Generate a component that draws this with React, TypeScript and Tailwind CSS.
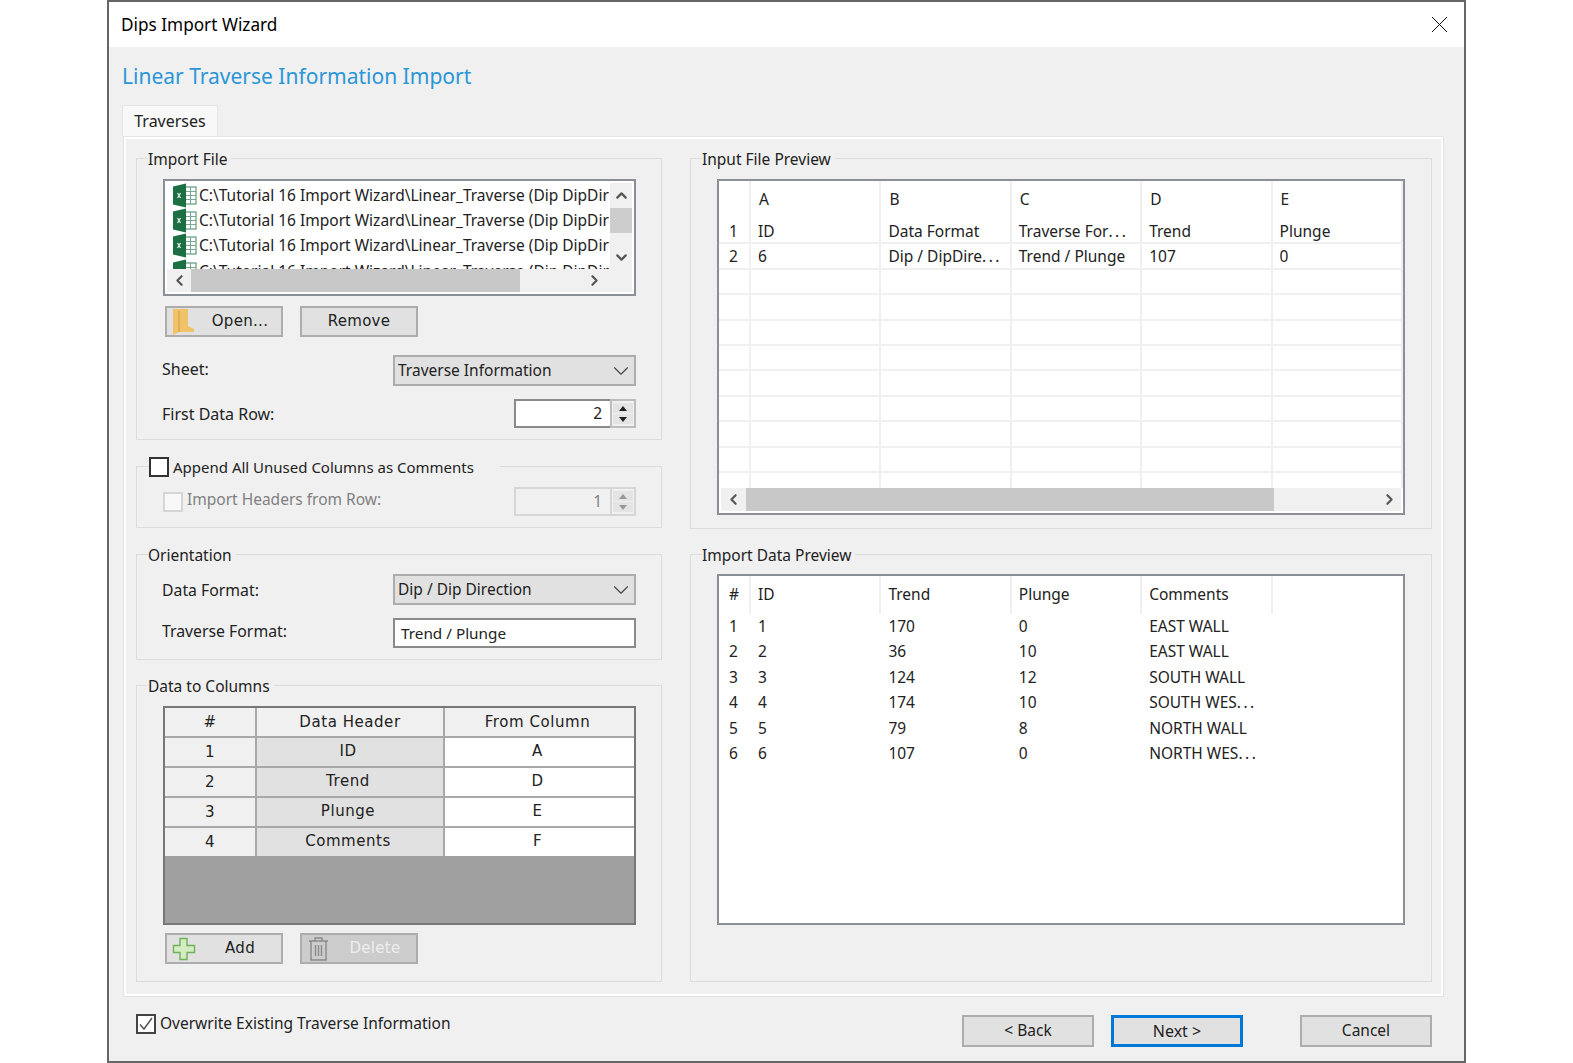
import React from "react";
import { ChevronLeft, ChevronRight, ChevronUp, ChevronDown, X } from "lucide-react";

const Excel = () => (
  <svg width="26" height="25" viewBox="0 0 26 25" className="shrink-0">
    <rect x="12" y="4" width="12" height="17" fill="#fff" stroke="#4f9470" strokeWidth="1.1" />
    <path d="M13 8.5h11M13 12.5h11M13 16.5h11M18.5 4v17" stroke="#7aa98f" strokeWidth="1.1" />
    <path d="M1 3.5 L14 0.5 V24.5 L1 21.5 Z" fill="#1c6f43" />
    <path d="M5.5 10l3 5M8.5 10l-3 5" stroke="#e8f3ec" strokeWidth="1.2" />
  </svg>
);

const Folder = () => (
  <svg width="24" height="28" viewBox="0 0 24 28">
    <path d="M1 1h15v17l6 3v3H7l-6 3z" fill="#f0c36a" />
    <path d="M7 3v21" stroke="#dca94d" strokeWidth="1.5" />
  </svg>
);

const Plus = () => (
  <svg width="24" height="24" viewBox="0 0 24 24">
    <path d="M8 1.5h7v7h7.5v7H15v7H8v-7H1.5v-7H8z" fill="#d3ecc0" stroke="#72b05a" strokeWidth="1.4" />
  </svg>
);

const Trash = () => (
  <svg width="24" height="26" viewBox="0 0 24 26" fill="none" stroke="#8a8a8a" strokeWidth="1.4">
    <path d="M2 5h19M8 5V2h7v3M4 5v19h15V5M8.5 9v11M11.5 9v11M14.5 9v11" />
  </svg>
);

const Spin = ({ value, disabled }: { value: string; disabled?: boolean }) => (
  <div className="flex h-[29px] w-[122px]">
    <div className={`flex flex-1 items-center justify-end border-y-2 border-l-2 pr-[8px] ${disabled ? "border-[#d6d6d6] bg-[#f0f0f0] text-[#808080]" : "border-[#8a8a8a] bg-white text-[#222]"}`}>
      {value}
    </div>
    <div className={`flex w-[26px] flex-col items-center justify-center gap-[1px] border-2 bg-[#f0f0f0] ${disabled ? "border-[#d6d6d6]" : "border-[#bdbdbd]"}`}>
      <div className="flex h-[10px] w-[20px] items-center justify-center bg-[#e4e4e4]">
        <div className={`h-0 w-0 border-x-[4px] border-b-[5px] border-x-transparent ${disabled ? "border-b-[#999]" : "border-b-[#222]"}`} />
      </div>
      <div className="flex h-[10px] w-[20px] items-center justify-center bg-[#e4e4e4]">
        <div className={`h-0 w-0 border-x-[4px] border-t-[5px] border-x-transparent ${disabled ? "border-t-[#999]" : "border-t-[#222]"}`} />
      </div>
    </div>
  </div>
);

const Combo = ({ text }: { text: string }) => (
  <div className="flex h-[31px] w-[243px] items-center justify-between border-2 border-[#adadad] bg-[#e1e1e1] pl-[3px]">
    <span>{text}</span>
    <ChevronDown size={26} strokeWidth={1} className="text-[#444]" />
  </div>
);

const ToolBtn = ({ icon, label, disabled }: { icon: React.ReactNode; label: string; disabled?: boolean }) => (
  <div className={`relative flex h-[31px] w-[118px] items-center justify-center border-2 border-[#adadad] font-['DejaVu_Sans'] text-[15px] tracking-[0.3px] ${disabled ? "bg-[#cccccc] text-[#eeeeee]" : "bg-[#e1e1e1] text-[#222]"}`}>
    {icon && <span className="absolute left-[5px] top-[1px] flex h-[26px] items-center">{icon}</span>}
    <span className={icon ? "pl-[32px]" : ""}>{label}</span>
  </div>
);

const HBar = ({ leftW, thumbW, pr }: { leftW: number; thumbW: number; pr: number }) => (
  <div className="flex h-[23px] shrink-0 items-center bg-[#f0f0f0]">
    <div className="flex items-center justify-center" style={{ width: leftW }}>
      <ChevronLeft size={17} strokeWidth={3} className="text-[#555]" />
    </div>
    <div className="h-full bg-[#c8c8c8]" style={{ width: thumbW }} />
    <div className="flex flex-1 items-center justify-end" style={{ paddingRight: pr }}>
      <ChevronRight size={17} strokeWidth={3} className="text-[#555]" />
    </div>
  </div>
);

const Group = ({ title, className, children }: { title: string; className: string; children: React.ReactNode }) => (
  <div className={`relative border border-[#dcdcdc] ${className}`}>
    <span className="absolute left-[11px] top-[-10px] bg-[#f0f0f0] pr-[4px] leading-[20px]">{title}</span>
    {children}
  </div>
);

const Cell = ({ text }: { text: string }) =>
  text.endsWith("…") ? (
    <>
      {text.slice(0, -1)}
      <span className="tracking-[2.5px]">...</span>
    </>
  ) : (
    <>{text}</>
  );

const inputCols = [
  { h: "A", r: ["ID", "6"] },
  { h: "B", r: ["Data Format", "Dip / DipDire…"] },
  { h: "C", r: ["Traverse For…", "Trend / Plunge"] },
  { h: "D", r: ["Trend", "107"] },
  { h: "E", r: ["Plunge", "0"] },
];

const importHead = ["ID", "Trend", "Plunge", "Comments"];
const importRows = [
  ["1", "1", "170", "0", "EAST WALL"],
  ["2", "2", "36", "10", "EAST WALL"],
  ["3", "3", "124", "12", "SOUTH WALL"],
  ["4", "4", "174", "10", "SOUTH WES…"],
  ["5", "5", "79", "8", "NORTH WALL"],
  ["6", "6", "107", "0", "NORTH WES…"],
];

const mapRows = [
  ["1", "ID", "A"],
  ["2", "Trend", "D"],
  ["3", "Plunge", "E"],
  ["4", "Comments", "F"],
];

export default function App() {
  return (
    <div className="min-h-[1063px] bg-white font-['Noto_Sans',sans-serif] text-[15.5px] text-[#222]">
      <div className="ml-[107px] flex h-[1063px] w-[1359px] flex-col border-2 border-[#666]">
        <div className="flex h-[45px] shrink-0 items-center justify-between bg-white pl-[12px] pr-[10px] text-[17.2px] text-black">
          <span>Dips Import Wizard</span>
          <X size={29} strokeWidth={0.8} />
        </div>
        <div className="flex flex-1 flex-col bg-[#f0f0f0] pl-[14px]">
          <div className="-ml-px flex h-[58px] shrink-0 items-center pt-[2px] text-[21px] text-[#2a96d8]">
            Linear Traverse Information Import
          </div>
          <div className="-ml-px flex h-[31px] w-[96px] shrink-0 items-center justify-center border-x border-t border-[#e6e6e6] bg-[#f8f8f8] text-[16px]">
            Traverses
          </div>
          <div className="flex h-[861px] w-[1321px] shrink-0 gap-[28px] border border-[#e3e3e3] pl-[12px] pt-[21px] shadow-[inset_0_0_0_2px_#ffffff]">
            <div className="flex w-[526px] flex-col">
              <Group title="Import File" className="h-[282px] pl-[26px] pr-[25px] pt-[20px]">
                <div className="flex h-[117px] flex-col border-2 border-[#8c9096] bg-white p-[2px]">
                  <div className="flex min-h-0 flex-1">
                    <div className="min-w-0 flex-1 overflow-hidden pl-[5px]">
                      {[0, 1, 2, 3].map((i) => (
                        <div key={i} className="flex h-[25.2px] items-center whitespace-nowrap">
                          <Excel />
                          <span className="pl-px">C:\Tutorial 16 Import Wizard\Linear_Traverse (Dip DipDir</span>
                        </div>
                      ))}
                    </div>
                    <div className="flex w-[22px] shrink-0 flex-col items-center bg-[#f0f0f0] pb-[3px] pt-[4px]">
                      <ChevronUp size={17} strokeWidth={3} className="text-[#555]" />
                      <div className="mt-[4px] h-[25px] w-full bg-[#cdcdcd]" />
                      <ChevronDown size={17} strokeWidth={3} className="mt-auto text-[#555]" />
                    </div>
                  </div>
                  <HBar leftW={24} thumbW={329} pr={29} />
                </div>
                <div className="mt-[10px] flex gap-[17px] pl-[2px]">
                  <ToolBtn icon={<Folder />} label="Open..." />
                  <ToolBtn icon={null} label="Remove" />
                </div>
                <div className="mt-[18px] flex items-center justify-between">
                  <span className="-ml-px -mt-[3px] text-[16px]">Sheet:</span>
                  <Combo text="Traverse Information" />
                </div>
                <div className="mt-[13px] flex items-center justify-between">
                  <span className="-ml-px text-[16px]">First Data Row:</span>
                  <Spin value="2" />
                </div>
              </Group>

              <div className="relative mt-[26px] h-[62px] border border-[#dcdcdc] pl-[26px] pr-[25px] pt-[20px]">
                <div className="absolute left-[12px] top-[-11px] flex h-[22px] w-[351px] items-center gap-[4px] bg-[#f0f0f0] text-[15px]">
                  <span className="h-[20px] w-[20px] border-2 border-[#333] bg-white" />
                  <span>Append All Unused Columns as Comments</span>
                </div>
                <div className="flex items-center justify-between">
                  <div className="flex items-center gap-[4px] text-[#808080]">
                    <span className="h-[20px] w-[20px] border-2 border-[#d6d6d6] bg-[#f8f8f8]" />
                    <span className="-mt-[3px]">Import Headers from Row:</span>
                  </div>
                  <Spin value="1" disabled />
                </div>
              </div>

              <Group title="Orientation" className="mt-[26px] h-[106px] pl-[26px] pr-[25px] pt-[19px]">
                <div className="flex items-center justify-between">
                  <span className="-ml-px mt-[3px] text-[15.8px]">Data Format:</span>
                  <Combo text="Dip / Dip Direction" />
                </div>
                <div className="mt-[13px] flex items-center justify-between">
                  <span className="-ml-px -mt-[2px] text-[15.8px]">Traverse Format:</span>
                  <div className="flex h-[30px] w-[243px] items-center border-2 border-[#8a8a8a] bg-white pl-[6px] text-[15.3px]">Trend / Plunge</div>
                </div>
              </Group>

              <Group title="Data to Columns" className="mt-[25px] h-[297px] pl-[26px] pr-[25px] pt-[20px]">
                <div className="flex h-[219px] flex-col border-2 border-[#777] bg-[#a0a0a0] font-['DejaVu_Sans'] text-[15px] tracking-[0.55px]">
                  <div className="flex h-[30px] shrink-0 border-b-2 border-[#a8a8a8] bg-[#f0f0f0]">
                    <div className="flex w-[92px] items-center justify-center border-r-2 border-[#a8a8a8]">#</div>
                    <div className="flex w-[188px] items-center justify-center border-r-2 border-[#a8a8a8]">Data Header</div>
                    <div className="flex flex-1 items-center justify-center pr-[4px]">From Column</div>
                  </div>
                  {mapRows.map((r, i) => (
                    <div key={r[0]} className={`flex shrink-0 ${i < 3 ? "h-[30px] border-b-2 border-[#a8a8a8]" : "h-[28px]"}`}>
                      <div className="flex w-[92px] items-center justify-center border-r-2 border-[#a8a8a8] bg-[#f0f0f0]">{r[0]}</div>
                      <div className="flex w-[188px] items-center justify-center border-r-2 border-[#a8a8a8] bg-[#e1e1e1] pb-[2px] pr-[4px]">{r[1]}</div>
                      <div className="flex flex-1 items-center justify-center bg-white pb-[2px] pr-[4px]">{r[2]}</div>
                    </div>
                  ))}
                </div>
                <div className="mt-[8px] flex gap-[17px] pl-[2px]">
                  <ToolBtn icon={<Plus />} label="Add" />
                  <ToolBtn icon={<Trash />} label="Delete" disabled />
                </div>
              </Group>
            </div>

            <div className="flex w-[742px] flex-col">
              <Group title="Input File Preview" className="h-[371px] pl-[26px] pt-[20px]">
                <div className="flex h-[336px] w-[688px] flex-col border-2 border-[#8c9096] bg-white">
                  <div className="flex h-[38px] shrink-0">
                    <div className="w-[32px] border-r-2 border-[#f0f0f0]" />
                    {inputCols.map((c) => (
                      <div key={c.h} className="flex w-[130.4px] items-center border-r-2 border-[#f0f0f0] pl-[8px]">{c.h}</div>
                    ))}
                  </div>
                  <div className="min-h-0 flex-1 overflow-hidden">
                    {Array.from({ length: 11 }).map((_, i) => (
                      <div key={i} className="flex h-[25.4px] border-b-2 border-[#f0f0f0]">
                        <div className="flex w-[32px] items-center border-r-2 border-[#f0f0f0] pl-[10px] pt-px">{i < 2 ? i + 1 : ""}</div>
                        {inputCols.map((c) => (
                          <div key={c.h} className="flex w-[130.4px] items-center whitespace-nowrap border-r-2 border-[#f0f0f0] pl-[7px] pt-px">
                            <span>
                              <Cell text={c.r[i] ?? ""} />
                            </span>
                          </div>
                        ))}
                      </div>
                    ))}
                  </div>
                  <div className="mx-[2px] mb-[2px]">
                    <HBar leftW={25} thumbW={528} pr={3} />
                  </div>
                </div>
              </Group>

              <Group title="Import Data Preview" className="mt-[25px] h-[428px] pl-[26px] pt-[19px]">
                <div className="flex h-[351px] w-[688px] flex-col border-2 border-[#8c9096] bg-white">
                  <div className="flex h-[38px] shrink-0">
                    <div className="flex w-[32px] items-center border-r-2 border-[#f0f0f0] pl-[10px]">#</div>
                    {importHead.map((h) => (
                      <div key={h} className="flex w-[130.4px] items-center border-r-2 border-[#f0f0f0] pl-[7px]">{h}</div>
                    ))}
                  </div>
                  <div>
                    {importRows.map((r) => (
                      <div key={r[0]} className="flex h-[25.4px] items-center">
                        <div className="w-[32px] pl-[10px]">{r[0]}</div>
                        {r.slice(1).map((c, i) => (
                          <div key={i} className="w-[130.4px] whitespace-nowrap pl-[7px]">
                            <Cell text={c} />
                          </div>
                        ))}
                      </div>
                    ))}
                  </div>
                </div>
              </Group>
            </div>
          </div>
          <div className="flex flex-1 items-start justify-between pl-[13px] pr-[32px] pt-[15px]">
            <div className="flex items-center gap-[4px]">
              <span className="flex h-[20px] w-[20px] items-center justify-center border-2 border-[#444] bg-white">
                <svg width="16" height="16" viewBox="0 0 16 16" fill="none" stroke="#555" strokeWidth="1.5">
                  <path d="M2 8.5l4 4.5 8-11" />
                </svg>
              </span>
              <span>Overwrite Existing Traverse Information</span>
            </div>
            <div className="mt-[3px] flex">
              <div className="flex h-[32px] w-[132px] items-center justify-center border-2 border-[#adadad] bg-[#e1e1e1]">&lt; Back</div>
              <div className="ml-[17px] flex h-[32px] w-[132px] items-center justify-center border-[3px] border-[#0078d7] bg-[#e1e1e1] text-[16px]">Next &gt;</div>
              <div className="ml-[57px] flex h-[32px] w-[132px] items-center justify-center border-2 border-[#adadad] bg-[#e1e1e1]">Cancel</div>
            </div>
          </div>
        </div>
      </div>
    </div>
  );
}
